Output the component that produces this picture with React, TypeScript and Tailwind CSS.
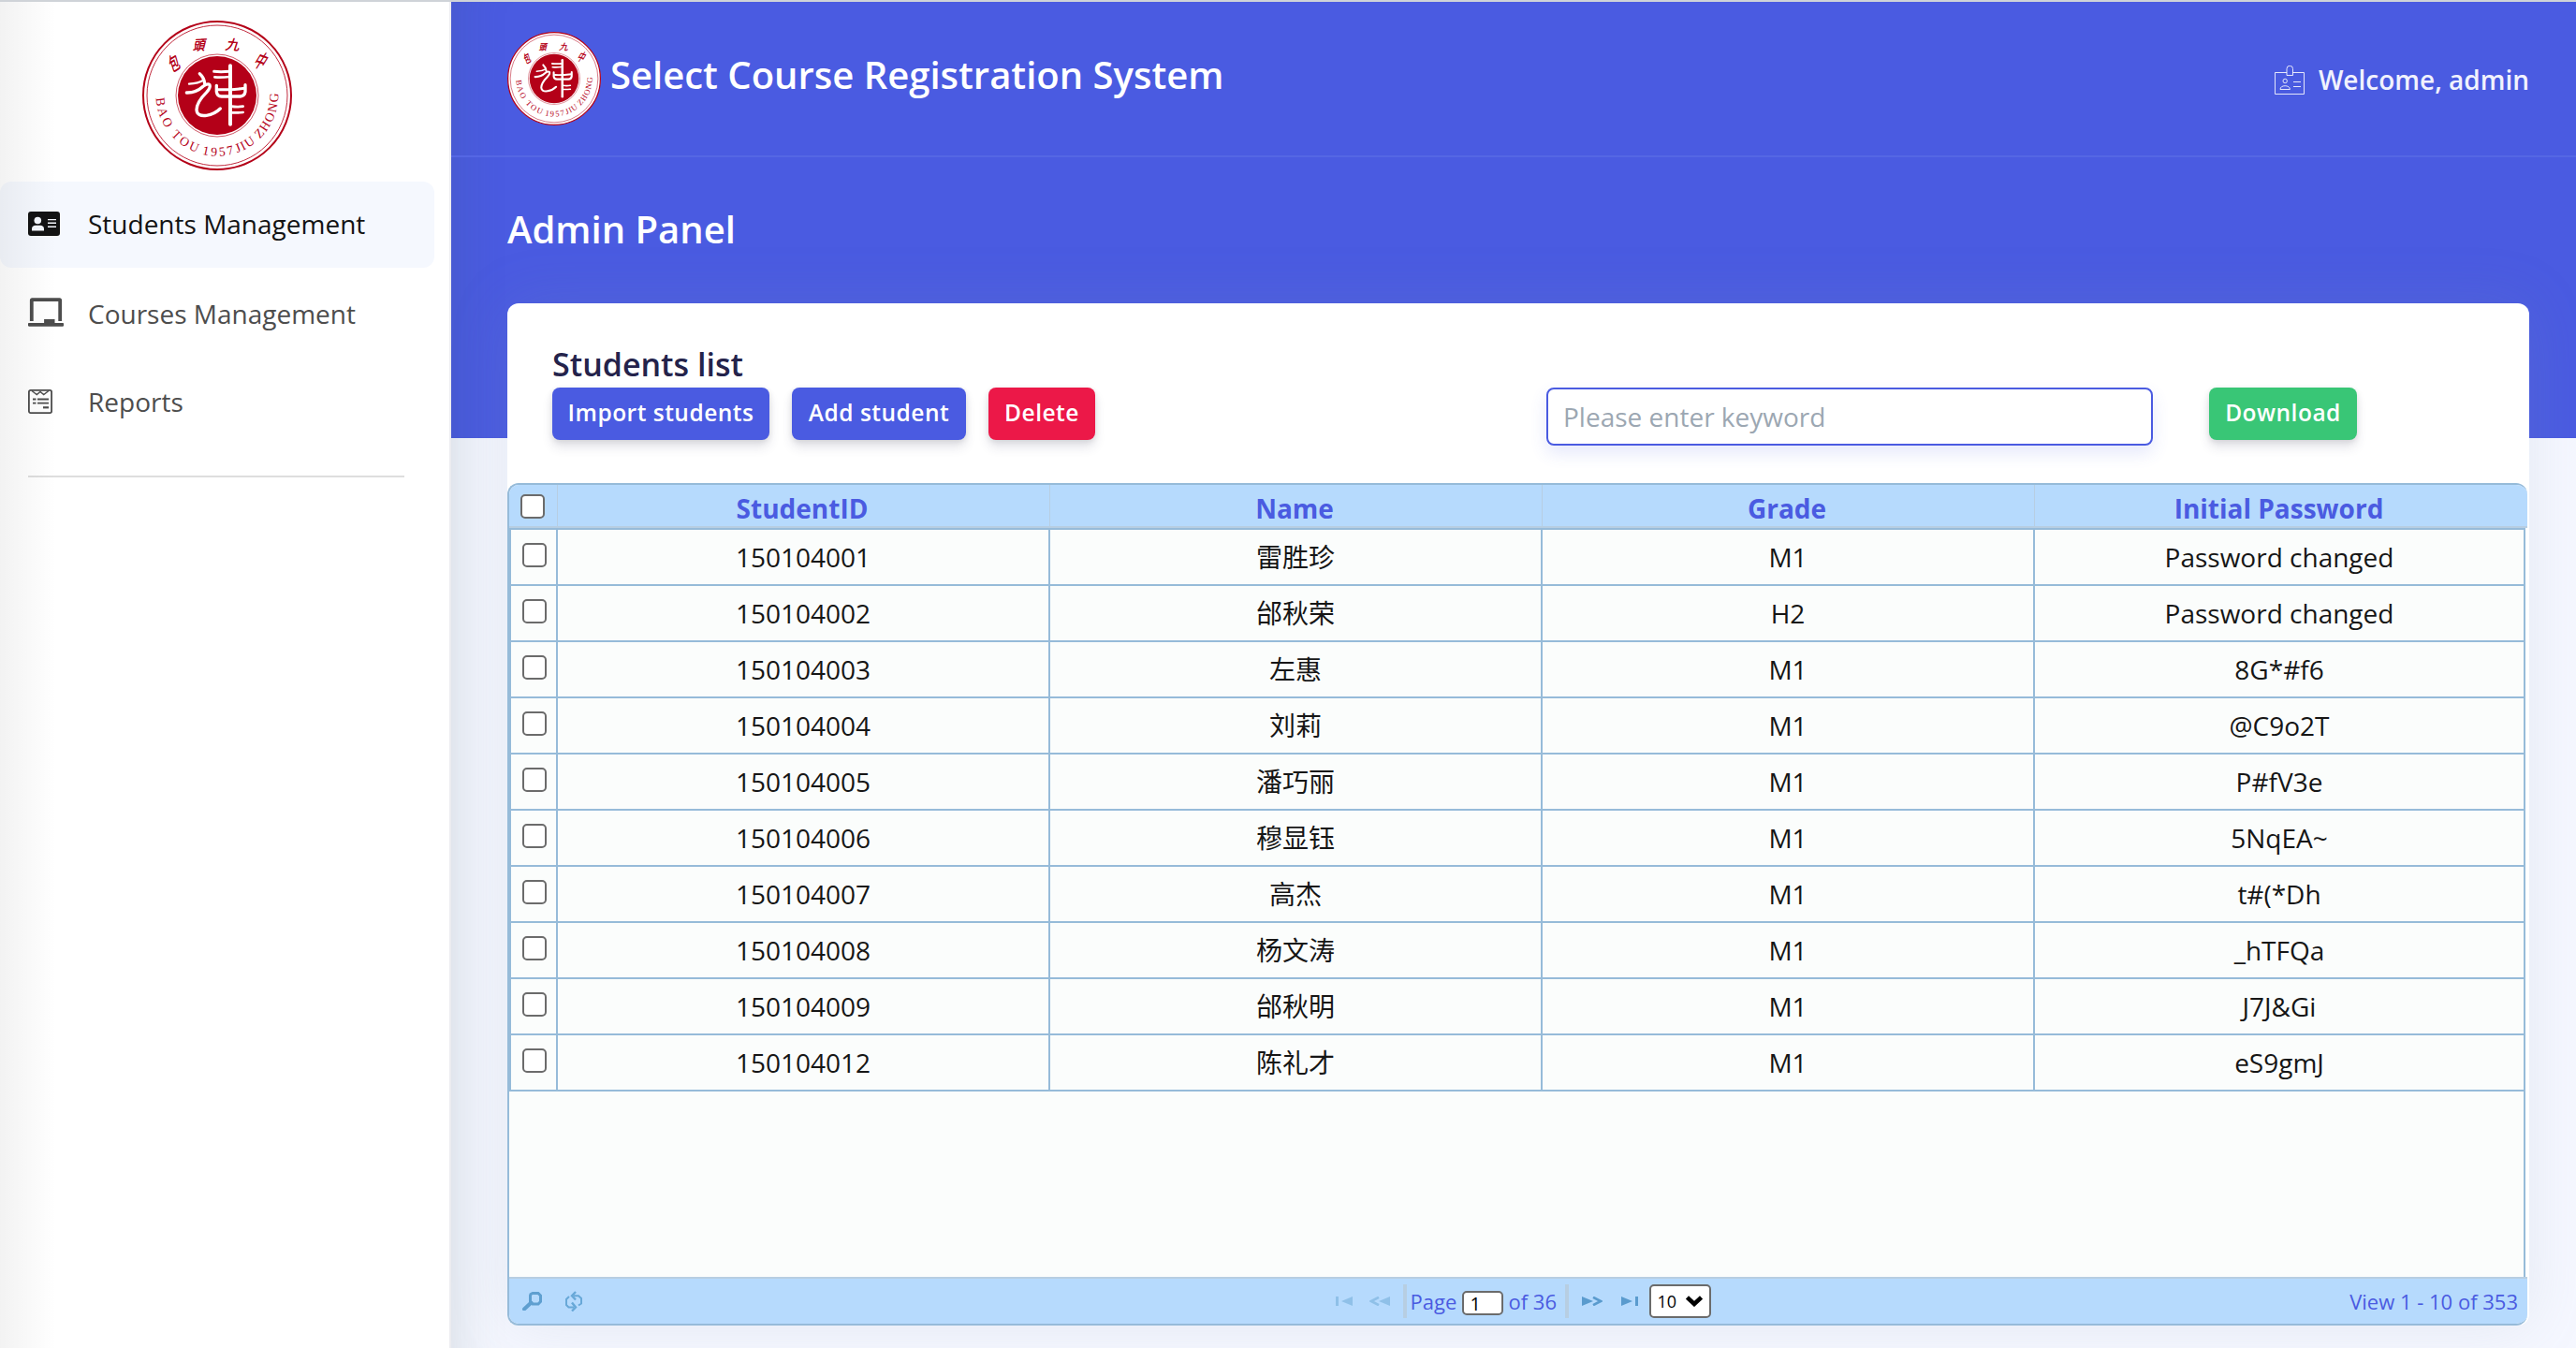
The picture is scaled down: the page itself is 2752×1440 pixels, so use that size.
import React from "react";
import { FaChalkboard } from "react-icons/fa";

const rows = [
  ["150104001", "雷胜珍", "M1", "Password changed"],
  ["150104002", "邰秋荣", "H2", "Password changed"],
  ["150104003", "左惠", "M1", "8G*#f6"],
  ["150104004", "刘莉", "M1", "@C9o2T"],
  ["150104005", "潘巧丽", "M1", "P#fV3e"],
  ["150104006", "穆显钰", "M1", "5NqEA~"],
  ["150104007", "高杰", "M1", "t#(*Dh"],
  ["150104008", "杨文涛", "M1", "_hTFQa"],
  ["150104009", "邰秋明", "M1", "J7J&Gi"],
  ["150104012", "陈礼才", "M1", "eS9gmJ"],
];

const columns = ["StudentID", "Name", "Grade", "Initial Password"];

/* Round school emblem, drawn on a 480-unit square. */
function Emblem({ id, className }: { id: string; className: string }) {
  return (
    <svg viewBox="0 0 480 480" className={className}>
      <circle cx="240" cy="240" r="238" fill="#fff" />
      <circle cx="240" cy="240" r="237" fill="none" stroke="#b40018" strokeWidth="6" />
      <circle cx="240" cy="240" r="225" fill="none" stroke="#b40018" strokeWidth="2.5" />
      <circle cx="240" cy="240" r="132" fill="none" stroke="#b40018" strokeWidth="2" />
      <circle cx="240" cy="240" r="126" fill="#b40018" />
      <g fill="none" stroke="#fff" strokeWidth="10" strokeLinecap="round" strokeLinejoin="round">
        <path d="M184 170 Q198 182 200 202" />
        <path d="M150 203 Q180 202 198 190" strokeWidth="7" />
        <path d="M142 231 Q172 232 196 210 Q210 200 216 206 Q220 214 206 230 Q174 262 174 286 Q176 308 206 304 Q232 300 250 282" />
        <path d="M230 163 Q250 165 280 163" strokeWidth="9" />
        <path d="M232 181 Q252 183 280 180" strokeWidth="8" />
        <path d="M282 145 V332" strokeWidth="12" />
        <path d="M238 208 V228 Q240 243 254 243 H314 Q328 242 330 228 V206" />
        <path d="M244 221 Q280 223 328 217" strokeWidth="9" />
        <path d="M286 275 Q304 278 323 275" strokeWidth="8" />
        <path d="M286 295 Q304 296 323 294" strokeWidth="8" />
      </g>
      <g fill="#b40018" fontFamily='"Noto Sans CJK TC", sans-serif' fontWeight="300" fontSize="44" textAnchor="middle" stroke="#b40018" strokeWidth="2">
        <text transform="translate(102 135) rotate(-32) skewX(-14) scale(0.75 1.3)" y="17">包</text>
        <text transform="translate(185 77) rotate(-2) skewX(-16) scale(0.85 1)" y="17">頭</text>
        <text transform="translate(293 76) rotate(4) skewX(-14)" y="17">九</text>
        <text transform="translate(382 128) rotate(20) skewX(-12) scale(0.75 1.4)" y="17">中</text>
      </g>
      <path id={id} d="M44 238 A196 196 0 1 0 433 204" fill="none" />
      <g fill="#b40018" fontFamily='"Liberation Serif", serif' fontSize="41">
        <text><textPath href={"#" + id} startOffset="10" textLength="231" lengthAdjust="spacing">BAO TOU</textPath></text>
        <text><textPath href={"#" + id} startOffset="259" textLength="104" lengthAdjust="spacing">1957</textPath></text>
        <text><textPath href={"#" + id} startOffset="373" textLength="68" lengthAdjust="spacing">JIU</textPath></text>
        <text><textPath href={"#" + id} startOffset="458" textLength="163" lengthAdjust="spacing">ZHONG</textPath></text>
      </g>
    </svg>
  );
}

function CardIcon() {
  return (
    <svg viewBox="0 0 34 26" className="w-[34px] h-[26px]">
      <rect width="34" height="26" rx="3" fill="#131313" />
      <g fill="#f5f8fe">
        <circle cx="10.3" cy="9.5" r="3.8" />
        <path d="M4 20.5v-2.2c0-2.2 1.8-3.6 4-3.6h5c2.200 0 4 1.400 4 3.600v2.200z" />
        <path d="M21 8h9v1.300h-9zM21 11.600h9v1.300h-9zM21 15.400h9v1.600h-9z" />
      </g>
    </svg>
  );
}

function ReportIcon() {
  return (
    <svg viewBox="0 0 26 26" className="w-[26px] h-[26px]" fill="none" stroke="#4d4d4d">
      <rect x="0.9" y="0.9" width="24.200" height="24.200" rx="1.800" strokeWidth="1.800" />
      <path d="M4 1.500L9.300 5.500L13 2.500L16.700 5.500L22 1.500" strokeWidth="1.400" />
      <path d="M5 10.500h3.500M10 10.500h12M5 14.700h3.500M10 14.700h12" strokeWidth="1.800" />
      <path d="M16 19.300h6" strokeWidth="2.200" />
    </svg>
  );
}

function BadgeIcon() {
  return (
    <svg viewBox="0 0 32 31" className="w-8 h-[31px]" fill="none" stroke="#fff" strokeWidth="1" strokeOpacity="0.85">
      <path d="M13 7.500H0.500V30.500H31.500V7.500H19.500" />
      <path d="M13 10.500V3.500a3.200 3.200 0 0 1 6.500 0V10.500z" />
      <circle cx="11.200" cy="16.500" r="2.200" />
      <path d="M6 25.500c0-2.500 2.400-3.800 5.200-3.800s5.200 1.300 5.200 3.800z" />
      <path d="M20 17.500h8M20 22.500h8" />
    </svg>
  );
}

function Check() {
  return (
    <input
      type="checkbox"
      className="block appearance-none size-[26px] rounded-[5px] border-2 border-[#6b6b6b] bg-white"
    />
  );
}

function NavItem({ icon, label, className }: { icon: React.ReactNode; label: string; className: string }) {
  return (
    <a className={"flex items-center pl-[30px] " + className}>
      <span className="w-16 shrink-0">{icon}</span>
      <span>{label}</span>
    </a>
  );
}

function Sidebar() {
  return (
    <aside className="relative w-[482px] shrink-0 bg-white border-r-2 border-[#ececf0] pt-5">
      <Emblem id="arc-side" className="block size-40 ml-[152px]" />
      <nav className="mt-3 text-[28px] leading-[40px] text-[#4d4d4d]">
        <NavItem icon={<CardIcon />} label="Students Management" className="h-[92px] w-[464px] pb-0.5 rounded-[12px] bg-[#f5f8fe] text-[#131313]" />
        <NavItem icon={<FaChalkboard className="w-[38px] h-[31px] -mt-1" />} label="Courses Management" className="h-[92px] mt-1 pb-0.5" />
        <NavItem icon={<ReportIcon />} label="Reports" className="h-[92px] mt-0.5 pb-0.5" />
      </nav>
      <hr className="mt-8 ml-[30px] w-[402px] border-0 h-0.5 bg-[#dedede]" />
      <div className="absolute inset-y-0 left-0 w-[60px] bg-linear-to-r from-black/5 to-transparent" />
    </aside>
  );
}

const btn = "h-14 rounded-lg text-white text-[24.5px] leading-[54px] pb-0.5 font-semibold tracking-[0.5px] text-center shadow-[0_8px_12px_rgba(50,50,93,0.12),0_2px_6px_rgba(0,0,0,0.1)]";

function Toolbar() {
  return (
    <div className="h-[192px] pl-12 pt-[41px]">
      <h2 className="text-[34px] leading-[48px] mb-px font-semibold text-[#24234b]">Students list</h2>
      <div className="flex items-start">
        <button className={btn + " w-[232px] bg-[#4a5be1]"}>Import students</button>
        <button className={btn + " w-[186px] ml-6 bg-[#4a5be1]"}>Add student</button>
        <button className={btn + " w-[114px] ml-6 bg-[#ec1848]"}>Delete</button>
        <input
          placeholder="Please enter keyword"
          className="ml-[482px] w-[648px] h-[62px] rounded-lg border-2 border-[#4a5be1] px-4 text-[28px] placeholder:text-[#9ca7b2] shadow-[0_8px_18px_rgba(74,91,225,0.14)]"
        />
        <button className={btn + " w-[158px] ml-[60px] bg-[#39c676]"}>Download</button>
      </div>
    </div>
  );
}

const grid = "grid grid-cols-[52px_526px_526px_526px_524px]";

function Table() {
  return (
    <div className="h-[900px] flex flex-col border-2 border-r-0 border-[#96bbd9] rounded-xl overflow-hidden mr-0.5">
      <div className={grid + " h-[46px] w-[2156px] bg-[#b6dafd] border-b-2 border-[#b7cee2]"}>
        <div className="border-r border-[#b7cee2] pl-3 pt-2.5">
          <Check />
        </div>
        {columns.map((c, i) => (
          <div key={c} className={"pr-[3px] text-center font-bold text-[28px] leading-[50px] text-[#4a5be1] h-[44px] border-[#b7cee2] " + (i < 3 ? "border-r" : "")}>
            {c}
          </div>
        ))}
      </div>
      <div className="flex-1 mr-0.5 bg-[#fbfdfc] border-t-2 border-r-2 border-[#96bbd9]">
        {rows.map((r) => (
          <div key={r[0]} className={grid + " h-[60px] border-b-2 border-[#96bbd9] text-[#161616]"}>
            <div className="border-l-2 border-r-2 border-[#96bbd9] pl-3 pt-3.5">
              <Check />
            </div>
            {r.map((c, i) => (
              <div key={i} className={"text-center text-[28px] leading-[58px] h-[58px] border-[#96bbd9] " + (i < 3 ? "border-r-2" : "pr-0.5")}>
                {c}
              </div>
            ))}
          </div>
        ))}
      </div>
      <Pager />
    </div>
  );
}

function Pager() {
  return (
    <div className="h-[50px] flex items-center justify-between bg-[#b6dafd] border-t-2 border-[#b7cee2] text-[22px] text-[#4a5be1]">
      <div className="w-[882px] flex items-center">
        <svg viewBox="0 0 22 20" className="ml-[14px] w-[22px] h-5" fill="none" stroke="#5f9fd0">
          <path d="M9 2.500L11 1.500H17L19.500 4V10.500L17 13H11L8.500 10.500V4z" strokeWidth="3" />
          <path d="M9.500 11.500L2 18.500" strokeWidth="4" strokeLinecap="round" />
        </svg>
        <svg viewBox="0 0 20 22" className="ml-[23px] w-5 h-[22px]" fill="none" stroke="#68a8d8" strokeWidth="2">
          <path d="M5 6L2 9V15L4.500 17.500H10M15 15.500L18 13.500V8L15 5.200H10" />
          <path d="M12 1L8 5.200L12 9.500M8 12.500L12 17.500L8 21.500" strokeWidth="2.400" />
        </svg>
      </div>
      <div className="flex items-center">
        <svg viewBox="0 0 18 10" className="w-[18px] h-[10px]" fill="#8fc0e8">
          <path d="M0 0h3v10h-3zM18 0v10L6 5z" />
        </svg>
        <svg viewBox="0 0 22 10" className="ml-[18px] w-[22px] h-[10px]" fill="#8fc0e8">
          <path d="M22 0v10L10 5z" />
          <path d="M10 0.800L2 5L10 9.200" fill="none" stroke="#8fc0e8" strokeWidth="2.600" />
        </svg>
        <span className="ml-[14px] w-1 h-9 bg-[#b7cee2]" />
        <span className="ml-1 w-[55px] whitespace-nowrap leading-8">Page</span>
        <input defaultValue="1" className="mt-1 w-11 h-[26px] rounded-[5px] border-2 border-[#6b6b6b] bg-white pl-[7px] text-[20px] leading-[22px] text-black" />
        <span className="ml-1.5 w-[60px] whitespace-nowrap leading-8">of 36</span>
        <span className="w-1 h-9 bg-[#b7cee2]" />
        <svg viewBox="0 0 22 10" className="ml-[14px] w-[22px] h-[10px]" fill="#5a9bce">
          <path d="M0 0v10L12 5z" />
          <path d="M12 0.800L20 5L12 9.200" fill="none" stroke="#5a9bce" strokeWidth="2.600" />
        </svg>
        <svg viewBox="0 0 18 10" className="ml-5 w-[18px] h-[10px]" fill="#5a9bce">
          <path d="M0 0v10L12 5zM15 0h3v10h-3z" />
        </svg>
        <span className="ml-3 w-[66px] h-9 flex items-center justify-between rounded-[5px] border-2 border-[#6b6b6b] bg-white pl-[7px] pr-[7px] text-[18px] text-black">
          10
          <svg viewBox="0 0 18 12" className="w-[18px] h-3" fill="none" stroke="#000" strokeWidth="4.500">
            <path d="M1.500 2L9 9L16.500 2" />
          </svg>
        </span>
      </div>
      <span className="w-[872px] pr-[10px] text-right">View 1 - 10 of 353</span>
    </div>
  );
}

export default function App() {
  return (
    <div className="w-[2752px] h-[1440px] overflow-hidden flex flex-col font-['Open_Sans','Noto_Sans_CJK_SC',sans-serif] bg-[#f5f7ff]">
      <div className="h-0.5 shrink-0 bg-[#cfd3d8]" />
      <div className="flex-1 flex min-h-0">
        <Sidebar />
        <main className="flex-1 bg-[linear-gradient(#4a5be1_466px,transparent_466px)] shadow-[inset_60px_0_60px_-60px_rgba(60,90,90,0.2)]">
          <header className="h-[166px] border-b-2 border-[#5567e4] pl-[60px] pr-[50px] flex items-start justify-between">
            <div className="flex items-start">
              <Emblem id="arc-head" className="block size-[100px] mt-8" />
              <h1 className="ml-[10px] mt-[50px] text-[40px] leading-[56px] font-semibold text-white">Select Course Registration System</h1>
            </div>
            <div className="flex items-center mt-[62px] text-[28px] leading-[42px] font-semibold text-[#f1f2fd]">
              <BadgeIcon />
              <span className="ml-[15px]">Welcome, admin</span>
            </div>
          </header>
          <h1 className="ml-[60px] mt-[49px] text-[40px] leading-[56px] font-semibold text-white">Admin Panel</h1>
          <section className="ml-[60px] mt-[51px] w-[2160px] h-[1092px] rounded-[12px] bg-white shadow-[0_0_64px_rgba(136,152,170,0.15)]">
            <Toolbar />
            <Table />
          </section>
        </main>
      </div>
    </div>
  );
}
